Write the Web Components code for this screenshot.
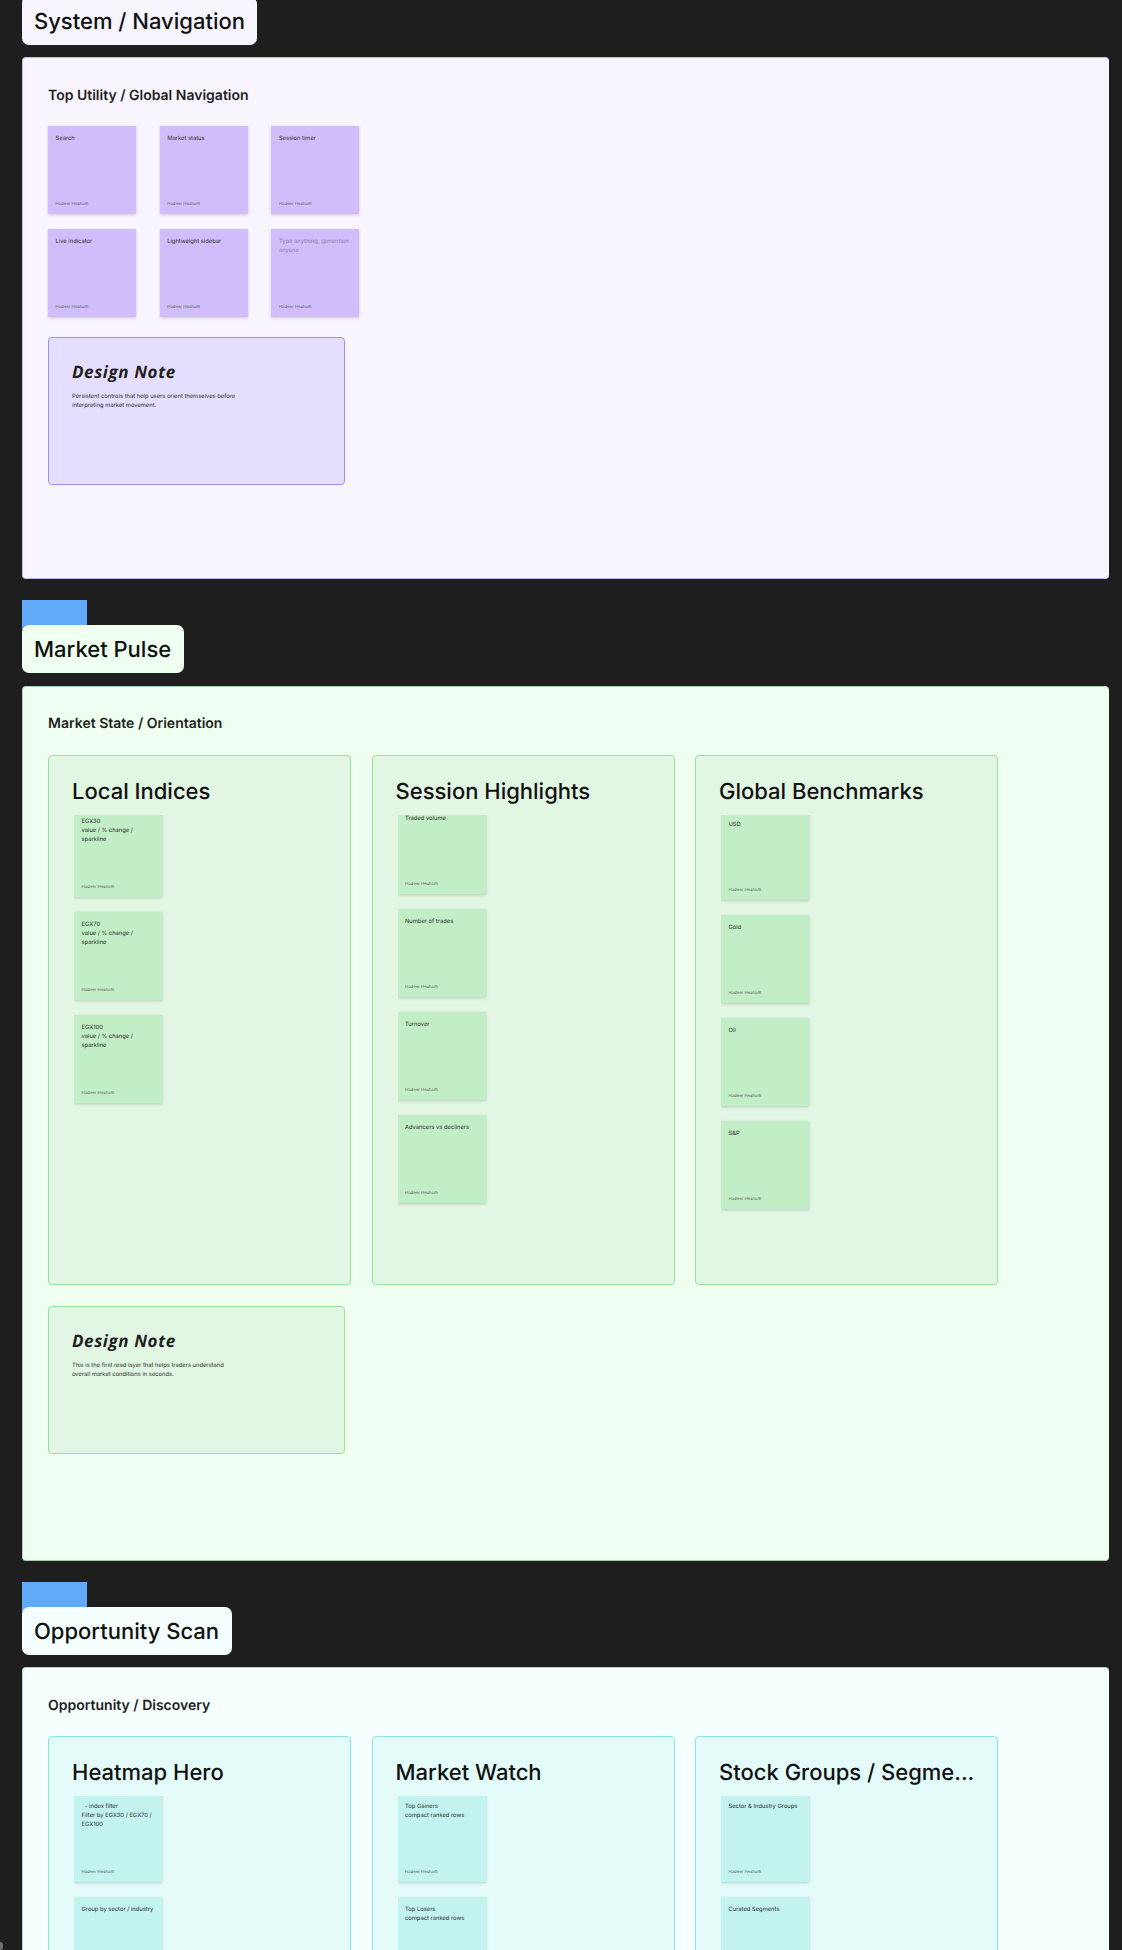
<!DOCTYPE html>
<html>
<head>
<meta charset="utf-8">
<title>Board</title>
<style>
  html, body { margin: 0; height: 1950px; overflow: hidden; background: #1e1e1e; }
  body { font-family: Inter, "Liberation Sans", sans-serif; color: #1e1e1e; text-rendering: geometricPrecision; }
</style>
</head>
<body>
<board-page>
  <board-section label="System / Navigation" heading="Top Utility / Global Navigation" tone="purple" style="--frame-h:522px">
    <sticky-grid>
      <sticky-note>Search</sticky-note>
      <sticky-note>Market status</sticky-note>
      <sticky-note>Session timer</sticky-note>
      <sticky-note>Live indicator</sticky-note>
      <sticky-note>Lightweight sidebar</sticky-note>
      <sticky-note placeholder>Type anything, @mention anyone</sticky-note>
    </sticky-grid>
    <design-note style="margin-top:20px">Persistent controls that help users orient themselves before interpreting market movement.</design-note>
  </board-section>

  <board-section label="Market Pulse" heading="Market State / Orientation" tone="green" style="--frame-h:875px">
    <board-columns>
      <board-column heading="Local Indices" shift="-5.5">
        <sticky-note>EGX30<br>value / % change / sparkline</sticky-note>
        <sticky-note>EGX70<br>value / % change / sparkline</sticky-note>
        <sticky-note>EGX100<br>value / % change / sparkline</sticky-note>
      </board-column>
      <board-column heading="Session Highlights" shift="-8.7">
        <sticky-note>Traded volume</sticky-note>
        <sticky-note>Number of trades</sticky-note>
        <sticky-note>Turnover</sticky-note>
        <sticky-note>Advancers vs decliners</sticky-note>
      </board-column>
      <board-column heading="Global Benchmarks" shift="-2.7">
        <sticky-note>USD</sticky-note>
        <sticky-note>Gold</sticky-note>
        <sticky-note>Oil</sticky-note>
        <sticky-note>S&amp;P</sticky-note>
      </board-column>
    </board-columns>
    <design-note style="margin-top:21px">This is the first read layer that helps traders understand overall market conditions in seconds.</design-note>
  </board-section>

  <board-section label="Opportunity Scan" heading="Opportunity / Discovery" tone="teal" style="--frame-h:400px">
    <board-columns>
      <board-column heading="Heatmap Hero" shift="-2.2">
        <sticky-note><span style="white-space:pre">  - index filter</span><br>Filter by EGX30 / EGX70 / EGX100</sticky-note>
        <sticky-note noauthor>Group by sector / industry</sticky-note>
      </board-column>
      <board-column heading="Market Watch" shift="-2.2">
        <sticky-note>Top Gainers<br>compact ranked rows</sticky-note>
        <sticky-note noauthor>Top Losers<br>compact ranked rows</sticky-note>
      </board-column>
      <board-column heading="Stock Groups / Segme..." shift="-2.2">
        <sticky-note>Sector &amp; Industry Groups</sticky-note>
        <sticky-note noauthor>Curated Segments</sticky-note>
      </board-column>
    </board-columns>
  </board-section>
</board-page>
<corner-dot></corner-dot>

<script>
// small helper so each element gets an open shadow root from a string
function shadowFrom(el, html) {
  el.attachShadow({ mode: 'open' }).innerHTML = html;
  return el.shadowRoot;
}

const tones = {
  purple: { frame: '#f8f5ff', col: '#e5dffd', sticky: '#d0bdf9', line: '#a98bfb', edge: '#c4b8e6' },
  green:  { frame: '#effff0', col: '#e2f6e4', sticky: '#c1eec4', line: '#97e2a0', edge: '#a9cdb0' },
  teal:   { frame: '#f5fffe', col: '#e3fbf9', sticky: '#c2f3ef', line: '#8fe4df', edge: '#a9d6d3' }
};

class BoardPage extends HTMLElement {
  constructor() {
    super();
    shadowFrom(this, `
    <style>
      :host { display: block; padding: 0 13px 0 21.5px; margin-top: -28.5px; }
      .stack { display: flex; flex-direction: column; gap: 21px; }
    </style>
    <div class="stack"><slot></slot></div>
    `);
  }
}

class BoardSection extends HTMLElement {
  constructor() {
    super();
    const t = tones[this.getAttribute('tone')];
    for (const k in t) this.style.setProperty('--' + k, t[k]);
    const root = shadowFrom(this, `
    <style>
      :host { display: block; }
      .marker { width: 65px; height: 30px; margin-bottom: -5px; background: #60aaf8; }
      .tag {
        position: relative;
        display: inline-block;
        height: 48px;
        line-height: 50px;
        padding: 0 12.5px;
        background: var(--frame);
        border-radius: 7px;
        font-size: 22px;
        font-weight: 500;
        color: #111;
        vertical-align: top;
      }
      .frame {
        box-sizing: border-box;
        height: var(--frame-h);
        margin-top: 12.5px;
        padding: 27.5px 26px 0 25.5px;
        background: var(--frame);
        border: 1px solid var(--edge);
        border-width: 1px 0 1px 1px;
        border-radius: 4px;
      }
      h2 { margin: 0 0 20.5px; font-size: 14px; line-height: 20px; font-weight: 600; color: #1e1e1e; }
    </style>
    <div class="marker"></div>
    <div class="tag"></div>
    <div class="frame">
      <h2></h2>
      <slot></slot>
    </div>
    `);
    root.querySelector('.tag').textContent = this.getAttribute('label');
    root.querySelector('h2').textContent = this.getAttribute('heading');
  }
}

class StickyGrid extends HTMLElement {
  constructor() {
    super();
    shadowFrom(this, `
    <style>
      :host { display: grid; grid-template-columns: repeat(3, 88px); column-gap: 23.7px; row-gap: 15px; }
    </style>
    <slot></slot>
    `);
  }
}

class StickyNote extends HTMLElement {
  constructor() {
    super();
    shadowFrom(this, `
    <style>
      :host {
        display: flex;
        flex-direction: column;
        justify-content: space-between;
        box-sizing: border-box;
        width: 88px;
        height: 88px;
        padding: 7.8px 7.5px 6px;
        background: var(--sticky);
        box-shadow: 0 1px 3px rgba(0, 0, 0, .18);
      }
      .body { font-size: 5.8px; line-height: 9px; color: #2b2b2b; }
      :host([placeholder]) .body { color: #8d80ac; }
      .author { font-size: 4.3px; line-height: 6px; color: #5b5b5b; }
      :host([noauthor]) .author { display: none; }
    </style>
    <div class="body"><slot></slot></div>
    <div class="author">Hadeer Hesham</div>
    `);
  }
}

class DesignNote extends HTMLElement {
  constructor() {
    super();
    shadowFrom(this, `
    <style>
      :host {
        display: block;
        box-sizing: border-box;
        width: 297px;
        height: 148px;
        padding: 23px 23px 0;
        background: var(--col);
        border: 1px solid var(--line);
        border-radius: 4px;
      }
      .title {
        margin: 0 0 9px;
        font-family: "Open Sans", "Liberation Sans", sans-serif;
        font-style: italic;
        font-weight: 700;
        font-size: 17px;
        line-height: 22px;
        letter-spacing: 0.6px;
        color: #1e1e1e;
      }
      .text { width: 166px; font-size: 5.8px; line-height: 9px; color: #2b2b2b; }
    </style>
    <div class="title">Design Note</div>
    <div class="text"><slot></slot></div>
    `);
  }
}

class BoardColumns extends HTMLElement {
  constructor() {
    super();
    shadowFrom(this, `
    <style>
      :host { display: flex; gap: 20.5px; align-items: flex-start; }
    </style>
    <slot></slot>
    `);
  }
}

class BoardColumn extends HTMLElement {
  constructor() {
    super();
    const root = shadowFrom(this, `
    <style>
      :host {
        display: block;
        box-sizing: border-box;
        width: 303px;
        height: 530px;
        padding: 24px 0 0 23px;
        background: var(--col);
        border: 1px solid var(--line);
        border-radius: 4px;
        overflow: hidden;
      }
      h3 { margin: 0; font-size: 22px; line-height: 24px; font-weight: 500; color: #111; }
      .clip { margin: 11px 0 0 2px; height: 460px; overflow: hidden; }
      .list { display: flex; flex-direction: column; gap: 15px; padding-bottom: 4px; }
    </style>
    <h3></h3>
    <div class="clip"><div class="list"><slot></slot></div></div>
    `);
    root.querySelector('h3').textContent = this.getAttribute('heading');
    root.querySelector('.list').style.marginTop = (this.getAttribute('shift') || 0) + 'px';
  }
}

// the little grey sliver sitting on the left edge at the bottom of the board
class CornerDot extends HTMLElement {
  constructor() {
    super();
    shadowFrom(this, `
    <style>
      :host { position: absolute; left: -3px; top: 1942px; width: 6px; height: 8px; border-radius: 3px; background: #6e6e6e; }
    </style>
    `);
  }
}

customElements.define('board-page', BoardPage);
customElements.define('board-section', BoardSection);
customElements.define('sticky-grid', StickyGrid);
customElements.define('sticky-note', StickyNote);
customElements.define('design-note', DesignNote);
customElements.define('board-columns', BoardColumns);
customElements.define('board-column', BoardColumn);
customElements.define('corner-dot', CornerDot);
</script>
</body>
</html>
